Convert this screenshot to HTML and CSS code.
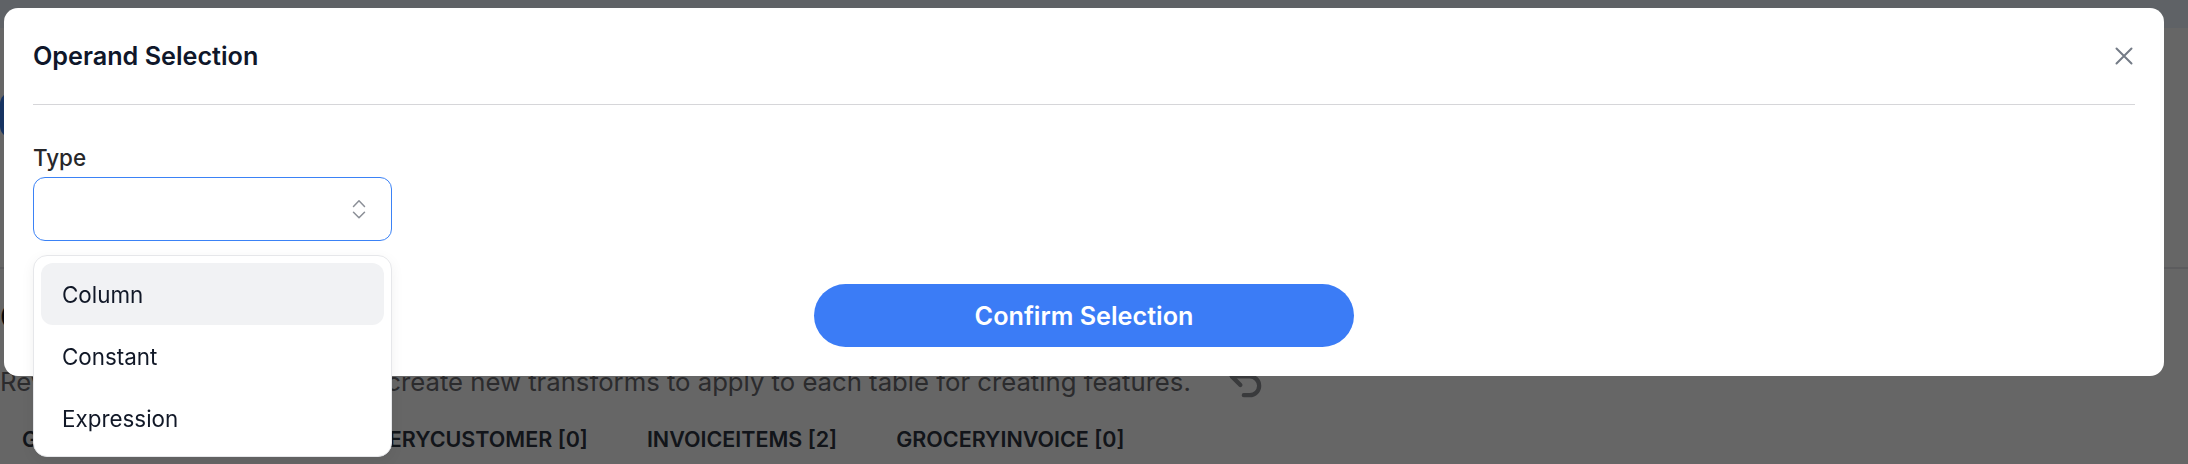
FILE: index.html
```html
<!DOCTYPE html>
<html lang="en">
<head>
<meta charset="utf-8">
<title>Operand Selection</title>
<link rel="stylesheet" href="styles.css">
</head>
<body>
<div class="page">
  <header class="topbar"></header>
  <div class="toolbar">
    <button class="primary-btn" type="button">Add Transform</button>
  </div>
  <section class="section">
    <h2 class="section-title">Column Transforms</h2>
    <div class="desc-row">
      <p class="desc">Review existing transforms and create new transforms to apply to each table for creating features.</p>
      <svg class="undo-icon" viewBox="0 0 24 24" fill="none" stroke="currentColor" stroke-width="2.5" stroke-linecap="round" stroke-linejoin="round"><path d="M9 14 4 9l5-5"/><path d="M4 9h10.5a5.5 5.5 0 0 1 0 11H11"/></svg>
    </div>
    <nav class="tabs">
      <span class="tab">GROCERYPRODUCT [3]</span>
      <span class="tab">GROCERYCUSTOMER [0]</span>
      <span class="tab">INVOICEITEMS [2]</span>
      <span class="tab">GROCERYINVOICE [0]</span>
    </nav>
  </section>
</div>

<div class="overlay">
  <div class="modal" role="dialog">
    <div class="modal-header">
      <h3 class="modal-title">Operand Selection</h3>
      <button class="close-btn" type="button" aria-label="Close">
        <svg viewBox="0 0 18 18" fill="none" stroke="currentColor" stroke-width="2" stroke-linecap="round"><path d="M1.5 1.5l15 15M16.5 1.5l-15 15"/></svg>
      </button>
    </div>
    <div class="modal-body">
      <label class="field-label">Type</label>
      <div class="select-wrap">
        <div class="select">
          <svg class="chevrons" viewBox="0 0 14 20" fill="none" stroke="currentColor" stroke-width="1.5" stroke-linecap="round" stroke-linejoin="round"><path d="M1.5 7.5 7 1.8l5.5 5.7"/><path d="M1.5 13.2 7 18.8l5.5-5.6"/></svg>
        </div>
        <ul class="menu">
          <li class="menu-item active">Column</li>
          <li class="menu-item">Constant</li>
          <li class="menu-item">Expression</li>
        </ul>
      </div>
      <div class="modal-footer">
        <button class="confirm-btn" type="button">Confirm Selection</button>
      </div>
    </div>
  </div>
</div>
</body>
</html>
```

FILE: styles.css
```css
* { box-sizing: border-box; }

html, body {
  margin: 0;
  padding: 0;
  width: 2188px;
  height: 464px;
  overflow: hidden;
  background: #ffffff;
  font-family: Inter, "Liberation Sans", sans-serif;
}

/* ---------- page behind the dialog ---------- */
.page {
  width: 2188px;
  height: 464px;
  background: #ffffff;
}

.topbar {
  height: 28px;
  background: #edf5ff;
}

.toolbar {
  margin-top: 64px;
  height: 46px;
  display: flex;
}

.primary-btn {
  height: 46px;
  width: 180px;
  border: none;
  border-radius: 12px;
  background: #3b82f6;
  color: #ffffff;
  font: 600 20px Inter, sans-serif;
}

.section {
  margin-top: 129px;
  border-top: 2px solid #e5e7eb;
  padding-top: 28px;
}

.section-title {
  margin: 0;
  font-size: 33.6px;
  line-height: 40px;
  font-weight: 600;
  color: #111827;
}

.desc-row {
  margin-top: 24px;
  height: 41px;
  display: flex;
  align-items: center;
  gap: 34px;
}

.desc {
  margin: 0;
  font-size: 25.7px;
  line-height: 34px;
  color: #6b6b70;
  white-space: nowrap;
}

.undo-icon {
  width: 41px;
  height: 41px;
  color: #8f9196;
  flex: none;
}

.tabs {
  margin-top: 22px;
  padding-left: 22px;
  display: flex;
  gap: 59px;
}

.tab {
  font-size: 21.5px;
  line-height: 30px;
  font-weight: 600;
  color: #2f3542;
  white-space: nowrap;
}

/* ---------- overlay + dialog ---------- */
.overlay {
  position: fixed;
  inset: 0;
  background: rgba(0, 0, 0, 0.6);
}

.modal {
  position: absolute;
  left: 4px;
  top: 8px;
  width: 2160px;
  height: 368px;
  background: #ffffff;
  border-radius: 14px;
  padding: 0 29px 29px;
}

.modal-header {
  height: 97px;
  display: flex;
  align-items: center;
  justify-content: space-between;
  border-bottom: 1px solid #d6d6d9;
}

.modal-title {
  margin: 0;
  font-size: 25.2px;
  font-weight: 600;
  color: #0f172a;
  line-height: 34px;
}

.close-btn {
  width: 24px;
  height: 24px;
  padding: 3px;
  margin-right: -1px;
  border: none;
  background: transparent;
  color: #747b86;
  display: flex;
}

.close-btn svg {
  width: 18px;
  height: 18px;
}

.modal-body {
  padding-top: 39px;
  display: flex;
  flex-direction: column;
}

.field-label {
  font-size: 22.4px;
  line-height: 28px;
  font-weight: 500;
  color: #27272a;
  margin-bottom: 5px;
}

.select-wrap {
  position: relative;
  width: 359px;
}

.select {
  height: 64px;
  border: 1.4px solid #3b82f6;
  border-radius: 12px;
  background: #ffffff;
  display: flex;
  align-items: center;
  justify-content: flex-end;
  padding-right: 25px;
}

.chevrons {
  width: 14px;
  height: 20px;
  color: #8b8f97;
}

.menu {
  position: absolute;
  top: 78px;
  left: 0;
  width: 359px;
  margin: 0;
  padding: 7px;
  list-style: none;
  background: #ffffff;
  border: 1px solid #e6e7ea;
  border-radius: 14px;
  box-shadow: 0 4px 14px rgba(0, 0, 0, 0.06);
  z-index: 2;
}

.menu-item {
  height: 62px;
  display: flex;
  align-items: center;
  padding-left: 21px;
  border-radius: 12px;
  font-size: 22.4px;
  color: #111827;
}

.menu-item.active {
  background: #f1f2f4;
}

.modal-footer {
  margin-top: 43px;
  display: flex;
  justify-content: center;
}

.confirm-btn {
  width: 540px;
  height: 63px;
  border: none;
  border-radius: 32px;
  background: #3b7cf6;
  color: #ffffff;
  font-family: Inter, "Liberation Sans", sans-serif;
  font-size: 25.2px;
  font-weight: 600;
}
```
